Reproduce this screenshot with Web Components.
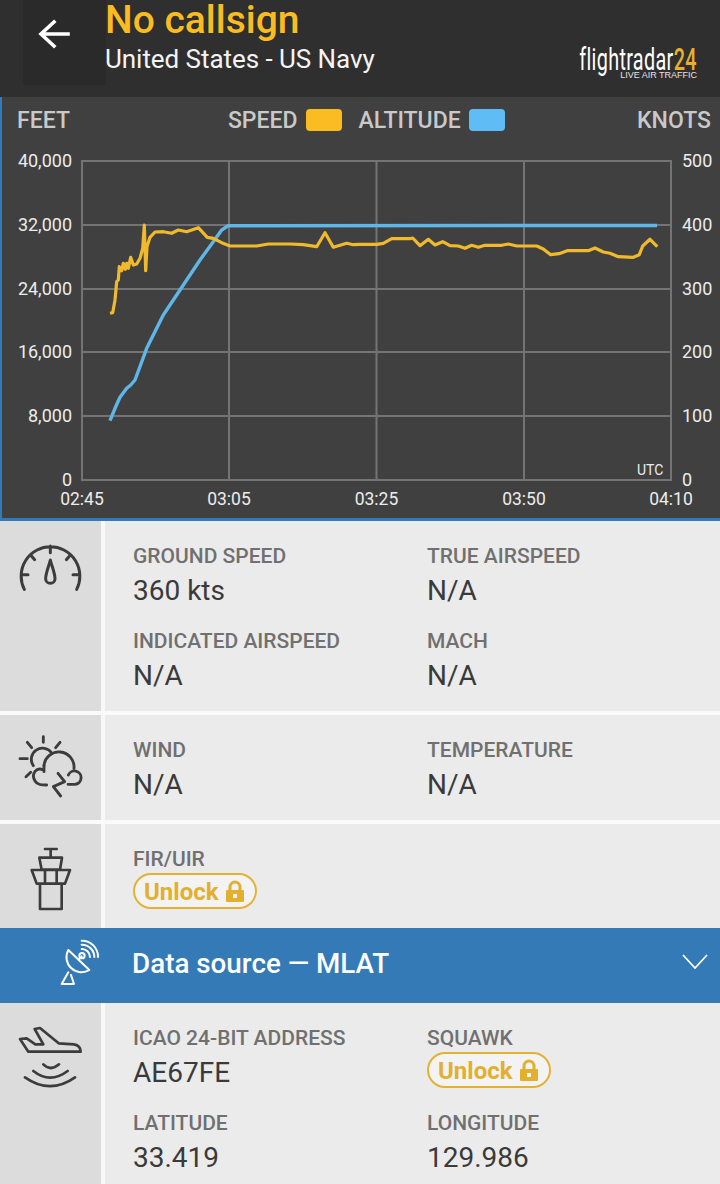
<!DOCTYPE html>
<html>
<head>
<meta charset="utf-8">
<style>
html, body { margin: 0; padding: 0; width: 720px; height: 1184px; overflow: hidden; background: #fafafa; }
body { font-family: Roboto, "Liberation Sans", sans-serif; }
fr-row + fr-row { margin-top: 4px; }
svg { display: block; }
</style>
</head>
<body>
<fr-header title="No callsign" subtitle="United States - US Navy"></fr-header>
<fr-chart></fr-chart>

<fr-row style="--row-h:190px">
  <svg slot="icon" width="110" height="70" viewBox="0 0 330 210" style="margin-top:9px" fill="none" stroke="#3c3c3c" stroke-width="9" stroke-linecap="round" stroke-linejoin="round">
    <path d="M73 178A88 88 0 1 1 230 178M151 48V68M66 134H84M219 134H237M91 74L104 89M212 74L199 89" />
    <path d="M151 90C146 110 137 130 137 146A14 14 0 0 0 165 146C165 130 156 110 151 90Z" />
  </svg>
  <fr-field label="GROUND SPEED">360 kts</fr-field>
  <fr-field label="TRUE AIRSPEED">N/A</fr-field>
  <fr-field label="INDICATED AIRSPEED">N/A</fr-field>
  <fr-field label="MACH">N/A</fr-field>
</fr-row>

<fr-row style="--row-h:105px">
  <svg slot="icon" width="110" height="80" viewBox="0 0 330 240" style="margin-top:10px" fill="none" stroke="#3c3c3c" stroke-width="8.5" stroke-linecap="round" stroke-linejoin="round">
    <path d="M130 35V52M82 52L95 68M180 52L167 68M60 101H82M78 155L92 142" />
    <path d="M100 122A32 32 0 0 1 155 84" />
    <path d="M132 122A45 45 0 0 1 222 130M205 150A20 20 0 1 1 225 178H204" />
    <path d="M130 135C110 125 92 145 105 168C112 180 125 180 140 180M132 122V140" />
    <path d="M174 145L194 170L160 185L182 213" />
  </svg>
  <fr-field label="WIND">N/A</fr-field>
  <fr-field label="TEMPERATURE">N/A</fr-field>
</fr-row>

<fr-row style="--row-h:104px">
  <svg slot="icon" width="100" height="85" viewBox="0 0 300 255" style="margin-top:11px" fill="none" stroke="#3c3c3c" stroke-width="8" stroke-linecap="round" stroke-linejoin="round">
    <path d="M135 42H170M152 42V66M118 68H186L180 104H125ZM95 105H210L195 146H110ZM135 105V146M170 105V146M120 146V222H185V146" />
  </svg>
  <fr-field label="FIR/UIR"><fr-unlock></fr-unlock></fr-field>
</fr-row>

<fr-source-bar text="Data source — MLAT"></fr-source-bar>

<fr-row style="--row-h:181px;margin-top:0">
  <svg slot="icon" width="100" height="170" viewBox="0 0 300 510" style="margin-top:-78px" fill="none" stroke="#3c3c3c" stroke-width="8" stroke-linecap="round" stroke-linejoin="round">
    <path d="M60 342L80 340L106 358H130L104 312L120 309L176 355L222 358Q242 362 242 380H85Z" />
    <path d="M130 418Q152 440 177 418M100 438Q150 478 203 438M75 457Q150 510 225 457" />
  </svg>
  <fr-field label="ICAO 24-BIT ADDRESS">AE67FE</fr-field>
  <fr-field label="SQUAWK"><fr-unlock></fr-unlock></fr-field>
  <fr-field label="LATITUDE">33.419</fr-field>
  <fr-field label="LONGITUDE">129.986</fr-field>
</fr-row>

<script>
class FrHeader extends HTMLElement {
  constructor() {
    super();
    this.attachShadow({ mode: 'open' });
    this.shadowRoot.innerHTML = `
<style>
:host { display: flex; height: 97px; background: #2f2f2f; color: #fff; }
.back { width: 83px; height: 85px; margin-left: 23px; background: #2a2a2a; display: flex; align-items: center; justify-content: center; padding: 0 21px 18px 0; box-sizing: border-box; flex: none; }
.text { flex: 1; margin-left: -1px; }
h1 { margin: 0; font: 500 39px/40px Roboto, sans-serif; color: #fbbc22; }
p { margin: 1px 0 0; font: 400 26px/36px Roboto, sans-serif; color: #f4f4f4; letter-spacing: -.05px; }
.logo { margin: 49px 23px 0 0; width: 120px; display: flex; flex-direction: column; align-items: flex-end; }
.word { font: 400 31px/22px Roboto, sans-serif; white-space: nowrap; width: 120px; display: flex; justify-content: flex-end; }
.word span { display: block; transform: scaleX(.64); transform-origin: right center; letter-spacing: .5px; }
.word b { font-weight: 500; color: #e8b02c; }
.tag { font: 400 9px/9px "Liberation Sans", sans-serif; color: #e4e4e4; white-space: nowrap; }
</style>
<div class="back">
  <svg width="34" height="32" viewBox="0 0 34 32" fill="none" stroke="#fff" stroke-width="3.6" stroke-linecap="square"><path d="M31 16H5M17 4L4 16L17 28"/></svg>
</div>
<div class="text"><h1></h1><p></p></div>
<div class="logo"><div class="word"><span>flightradar<b>24</b></span></div><div class="tag">LIVE AIR TRAFFIC</div></div>`;
  }
  connectedCallback() {
    this.shadowRoot.querySelector('h1').textContent = this.getAttribute('title');
    this.shadowRoot.querySelector('p').textContent = this.getAttribute('subtitle');
  }
}
customElements.define('fr-header', FrHeader);

// traced from the reference, in page pixels
const left = (pts) => pts.map(([x, y]) => [x / 3, 140 + y / 3]);
const right = (pts) => pts.map(([x, y]) => [360 + x / 3, 140 + y / 3]);
const low = (pts) => pts.map(([x, y]) => [x / 3, 380 + y / 3]);
const speed = [
  ...left([[330,520],[338,518],[345,480],[350,425],[355,420],[358,380],[365,392],[370,370],[376,388],[380,370],[385,385],[392,352],[400,375],[410,372],[420,355],[428,325],[433,255],[437,392],[441,320],[450,292],[465,276],[490,275],[515,280],[535,270],[560,275],[595,263],[622,292],[640,295],[665,308],[690,318],[770,318],[805,312],[870,312],[910,314],[950,320],[975,278],[1000,322],[1040,310],[1060,314]]),
  ...right([[0,313],[50,313],[70,310],[95,296],[150,296],[158,294],[180,317],[205,298],[225,315],[248,305],[270,317],[295,318],[315,325],[335,316],[355,322],[375,316],[425,316],[445,312],[470,318],[530,318],[550,327],[572,344],[597,341],[622,332],[685,332],[705,324],[730,336],[750,340],[775,350],[820,352],[838,344],[848,318],[870,298],[892,320]])
];
const altitude = [
  ...low([[330,122],[345,85],[360,52],[380,25],[392,15],[405,0]]),
  ...left([[440,625],[490,525],[540,450],[600,360],[640,305],[665,270],[685,257]]),
  [657, 225.5]
];
const toPoints = (pts) => pts.map(([x, y]) => x.toFixed(1) + ',' + y.toFixed(1)).join(' ');

class FrChart extends HTMLElement {
  constructor() {
    super();
    this.attachShadow({ mode: 'open' });
    const ys = [161, 225, 289, 352, 416, 480];
    const feet = ['40,000', '32,000', '24,000', '16,000', '8,000', '0'];
    const knots = ['500', '400', '300', '200', '100', '0'];
    const xs = [82, 229, 376.5, 524, 671];
    const times = ['02:45', '03:05', '03:25', '03:50', '04:10'];
    this.shadowRoot.innerHTML = `
<style>
:host { display: block; height: 424px; box-sizing: border-box; background: #404040; border-left: 2px solid #337ab7; border-bottom: 3px solid #337ab7; }
.legend { height: 46px; display: flex; align-items: center; font: 500 23px Roboto, sans-serif; color: #c9c9c9; padding: 0 9px 0 15px; }
.mid { display: flex; align-items: center; margin-left: 158px; }
.swatch { width: 36px; height: 22px; border-radius: 4px; margin: 0 17px 0 8px; }
.knots { margin-left: auto; }
svg { display: block; }
text { font-family: Roboto, sans-serif; font-size: 18px; fill: #ececec; }
.time { font-size: 17.5px; }
</style>
<div class="legend">
  <span>FEET</span>
  <div class="mid"><span>SPEED</span><i class="swatch" style="background:#fbbc22"></i><span>ALTITUDE</span><i class="swatch" style="background:#5fbcf5;margin-right:0"></i></div>
  <span class="knots">KNOTS</span>
</div>
<svg width="718" height="375" viewBox="2 143 718 375">
  <g stroke="#747474" stroke-width="2">
    ${ys.map((y) => `<line x1="81" x2="672" y1="${y}" y2="${y}"/>`).join('')}
    ${xs.map((x) => `<line x1="${x}" x2="${x}" y1="160" y2="481"/>`).join('')}
  </g>
  ${ys.map((y, i) => `<text x="72" y="${y + 5.5}" text-anchor="end">${feet[i]}</text>`).join('')}
  ${ys.map((y, i) => `<text x="682" y="${y + 5.5}">${knots[i]}</text>`).join('')}
  ${xs.map((x, i) => `<text class="time" x="${x}" y="505" text-anchor="middle">${times[i]}</text>`).join('')}
  <text x="637" y="475" style="font-size:14px">UTC</text>
  <polyline points="${toPoints(altitude)}" fill="none" stroke="#5fb6e8" stroke-width="3.4" stroke-linejoin="round"/>
  <polyline points="${toPoints(speed)}" fill="none" stroke="#f0ba2c" stroke-width="3.2" stroke-linejoin="round"/>
</svg>`;
  }
}
customElements.define('fr-chart', FrChart);

const rowTemplate = document.createElement('template');
rowTemplate.innerHTML = `
<style>
:host { display: flex; height: var(--row-h); background: #f8f8f8; overflow: hidden; }
.icon { width: 101px; background: #dcdcdc; flex: none; }
.body { margin-left: 4px; flex: 1; background: #ebebeb; padding: 23px 0 0 28px; display: grid; grid-template-columns: 294px 1fr; row-gap: 21px; align-content: start; }
</style>
<div class="icon"><slot name="icon"></slot></div>
<div class="body"><slot></slot></div>`;

class FrRow extends HTMLElement {
  constructor() {
    super();
    this.attachShadow({ mode: 'open' });
    this.shadowRoot.appendChild(rowTemplate.content.cloneNode(true));
  }
}
customElements.define('fr-row', FrRow);

class FrField extends HTMLElement {
  constructor() {
    super();
    this.attachShadow({ mode: 'open' });
    this.shadowRoot.innerHTML = `
<style>
:host { display: block; }
.label { font: 500 21px/24px Roboto, sans-serif; color: #707070; white-space: nowrap; }
.value { font: 400 28px/34px Roboto, sans-serif; color: #3a3a3a; margin-top: 6px; }
</style>
<div class="label"></div>
<div class="value"><slot></slot></div>`;
  }
  connectedCallback() {
    this.shadowRoot.querySelector('.label').textContent = this.getAttribute('label');
  }
}
customElements.define('fr-field', FrField);

class FrUnlock extends HTMLElement {
  constructor() {
    super();
    this.attachShadow({ mode: 'open' });
    this.shadowRoot.innerHTML = `
<style>
:host { display: inline-flex; align-items: center; box-sizing: border-box; width: 124px; height: 36px; margin-top: -4px; vertical-align: top; padding-left: 9px; gap: 7px; border: 2px solid #e3b232; border-radius: 18px; background: #f3f3f3; color: #e2b02e; font: 700 24px Roboto, sans-serif; }
span { position: relative; top: 1px; }
</style>
<span>Unlock</span>
<svg width="18" height="22" viewBox="0 0 18 22" style="display:block"><path d="M4 11V7a5 5 0 0 1 10 0v4" fill="none" stroke="#e2b02e" stroke-width="3"/><path fill-rule="evenodd" d="M1 10h16a1 1 0 0 1 1 1v10a1 1 0 0 1-1 1H1a1 1 0 0 1-1-1V11a1 1 0 0 1 1-1zM7 14v4h4v-4z" fill="#e2b02e"/></svg>`;
  }
}
customElements.define('fr-unlock', FrUnlock);

class FrSourceBar extends HTMLElement {
  constructor() {
    super();
    this.attachShadow({ mode: 'open' });
    this.shadowRoot.innerHTML = `
<style>
:host { display: flex; align-items: center; height: 75px; background: #337ab7; color: #fff; font: 500 27.8px Roboto, sans-serif; }
.dish { width: 132px; height: 75px; flex: none; }
span { flex: 1; padding-bottom: 5px; }
.chev { margin-right: 12px; margin-bottom: 9px; }
</style>
<svg class="dish" viewBox="0 9 396 225" fill="none" stroke="#fff" stroke-width="6" stroke-linecap="round" stroke-linejoin="round">
  <path d="M205 75A45 45 0 0 0 268 135Z"/>
  <path d="M236 104L245 94"/><circle cx="246" cy="92" r="8"/>
  <path d="M245 72A24 24 0 0 1 270 96M245 59A37 37 0 0 1 283 96M245 47A48 48 0 0 1 294 96"/>
  <path d="M205 142L185 177H222L213 150"/>
</svg>
<span></span>
<svg class="chev" width="26" height="15" viewBox="0 0 26 15" fill="none" stroke="#fff" stroke-width="1.8"><path d="M1 1L13 14L25 1"/></svg>`;
  }
  connectedCallback() {
    this.shadowRoot.querySelector('span').textContent = this.getAttribute('text');
  }
}
customElements.define('fr-source-bar', FrSourceBar);
</script>
</body>
</html>
